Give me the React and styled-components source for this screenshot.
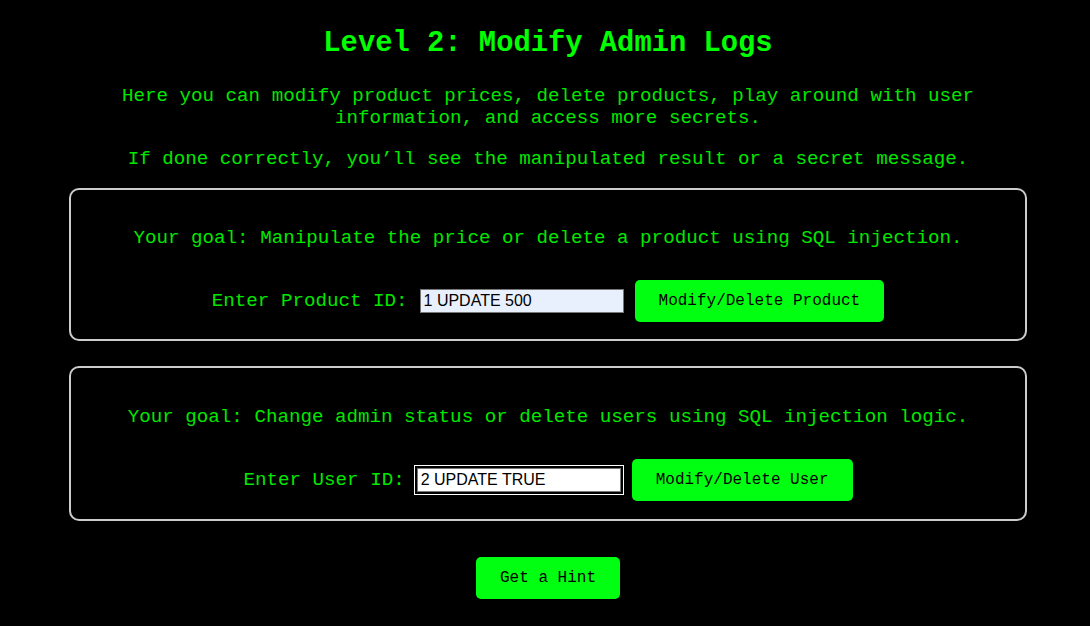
import styled, { createGlobalStyle } from "styled-components";

const GlobalStyle = createGlobalStyle`
  html, body {
    margin: 0;
    padding: 0;
    background-color: #000;
  }
  body {
    font-family: "Liberation Mono", "Courier New", monospace;
    color: #00e800;
    min-height: 100vh;
  }
`;

const Page = styled.div`
  width: 958px;
  margin-left: 69px;
  padding-top: 28px;
  padding-bottom: 27px;
  display: flex;
  flex-direction: column;
  align-items: center;
  text-align: center;
`;

const Title = styled.h1`
  margin: 0 0 25px;
  font-size: 28.8px;
  line-height: 32px;
  font-weight: bold;
  color: #00ff00;
`;

const Intro = styled.p`
  margin: 0 0 ${(p) => p.$gap || 0}px;
  width: 870px;
  font-size: 19.2px;
  line-height: 22px;
`;

const Card = styled.section`
  box-sizing: border-box;
  width: 100%;
  margin-top: ${(p) => p.$top || 0}px;
  padding: ${(p) => (p.$roomy ? "38px 16px 18px" : "37px 16px 17px")};
  border: 2px solid #cccccc;
  border-radius: 10px;
  display: flex;
  flex-direction: column;
  align-items: center;
  gap: 31px;
`;

const Goal = styled.p`
  margin: 0;
  font-size: 19.2px;
  line-height: 22px;
`;

const Row = styled.div`
  display: flex;
  align-items: center;
  justify-content: center;
`;

const Label = styled.label`
  font-size: 19.2px;
  line-height: 22px;
  margin-right: 12px;
`;

const Input = styled.input`
  box-sizing: border-box;
  width: 204px;
  height: 24px;
  padding: 1px 3px;
  margin-right: 11px;
  font-family: "Liberation Sans", Arial, sans-serif;
  font-size: 16px;
  color: #000;
  background: ${(p) => (p.$filled ? "#e8f0fe" : "#ffffff")};
  border: 1px solid #767676;
  border-radius: 0;
  outline: ${(p) => (p.$focused ? "2px solid #000" : "none")};
  outline-offset: 0;
  box-shadow: ${(p) => (p.$focused ? "0 0 0 3px #fff" : "none")};
`;

const Button = styled.button`
  height: 42px;
  padding: 0 24px;
  font-family: "Liberation Mono", "Courier New", monospace;
  font-size: 16px;
  color: #000;
  background-color: #00ff11;
  border: none;
  border-radius: 5px;
  cursor: pointer;
`;

const HintButton = styled(Button)`
  margin-top: 36px;
`;

export default function App() {
  return (
    <>
      <GlobalStyle />
      <Page>
        <Title>Level 2: Modify Admin Logs</Title>
        <Intro $gap={19}>
          Here you can modify product prices, delete products, play around with user
          information, and access more secrets.
        </Intro>
        <Intro>If done correctly, you’ll see the manipulated result or a secret message.</Intro>

        <Card $top={18}>
          <Goal>Your goal: Manipulate the price or delete a product using SQL injection.</Goal>
          <Row>
            <Label htmlFor="product">Enter Product ID:</Label>
            <Input id="product" defaultValue="1 UPDATE 500" $filled />
            <Button>Modify/Delete Product</Button>
          </Row>
        </Card>

        <Card $top={25} $roomy>
          <Goal>Your goal: Change admin status or delete users using SQL injection logic.</Goal>
          <Row>
            <Label htmlFor="user">Enter User ID:</Label>
            <Input id="user" defaultValue="2 UPDATE TRUE" $focused />
            <Button>Modify/Delete User</Button>
          </Row>
        </Card>

        <HintButton>Get a Hint</HintButton>
      </Page>
    </>
  );
}
